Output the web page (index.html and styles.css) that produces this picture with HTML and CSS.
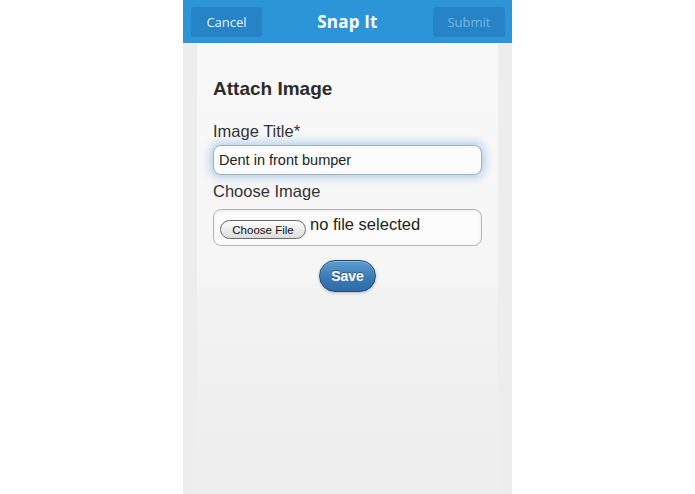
FILE: index.html
```html
<!DOCTYPE html>
<html>
<head>
<meta charset="utf-8">
<link rel="stylesheet" href="styles.css">
<title>Snap It</title>
</head>
<body>
<div class="phone">
  <header class="bar">
    <button class="bar-btn">Cancel</button>
    <h1 class="bar-title">Snap It</h1>
    <button class="bar-btn disabled">Submit</button>
  </header>
  <main class="content">
    <section class="panel">
      <h2 class="heading">Attach Image</h2>
      <label class="label first">Image Title*</label>
      <div class="field focused">Dent in front bumper</div>
      <label class="label">Choose Image</label>
      <div class="field file">
        <span class="file-btn">Choose File</span>
        <span class="file-text">no file selected</span>
      </div>
      <div class="actions">
        <span class="save">Save</span>
      </div>
    </section>
  </main>
</div>
</body>
</html>
```

FILE: styles.css
```css
html, body {
  margin: 0;
  padding: 0;
  background: #ffffff;
  height: 100%;
}
body {
  display: flex;
  justify-content: center;
  font-family: "Liberation Sans", Arial, sans-serif;
}
.phone {
  width: 329px;
  height: 494px;
  display: flex;
  flex-direction: column;
  background: #ededed;
}
.bar {
  height: 43px;
  flex: none;
  background: #2c95d8;
  display: flex;
  align-items: center;
  justify-content: space-between;
  padding: 0 7px 0 8px;
  box-sizing: border-box;
}
.bar-btn {
  width: 71px;
  height: 30px;
  border: 0;
  border-radius: 4px;
  background: #2683c5;
  color: #eaf3fb;
  font-family: "Open Sans", sans-serif;
  font-size: 13px;
  padding: 0;
}
.bar-btn.disabled {
  width: 72px;
  color: #79b6e4;
}
.bar-title {
  margin: 0;
  color: #ffffff;
  font-family: "Open Sans", sans-serif;
  font-weight: 700;
  font-size: 17px;
  letter-spacing: 0.2px;
}
.content {
  flex: 1;
  padding: 0 14px;
  display: flex;
}
.panel {
  flex: 1;
  padding: 14px 16px 0 16px;
  background: linear-gradient(#f8f8f8 0px, #f6f6f6 240px, #f2f2f2 250px, #f1f1f1 330px, #efefef 360px, #eeeeee 450px);
  display: flex;
  flex-direction: column;
  align-items: stretch;
}
.heading {
  margin: 20px 0 0 0;
  font-size: 19px;
  font-weight: 700;
  color: #2b2b2b;
  line-height: 24px;
}
.label {
  margin-top: 4px;
  font-size: 16.5px;
  color: #333333;
  line-height: 20px;
  display: block;
}
.label.first {
  margin-top: 20px;
}
.field {
  box-sizing: border-box;
  border-radius: 8px;
  background: #fcfcfc;
  border: 1px solid #b4b4b4;
  color: #222222;
  display: flex;
  align-items: center;
}
.field.focused {
  margin-top: 4px;
  height: 30px;
  padding-left: 5px;
  font-size: 14.5px;
  border-color: #9ab1c7;
  box-shadow: 0 0 8px 3px rgba(90, 150, 215, 0.4);
  margin-bottom: 2px;
}
.field.file {
  height: 37px;
  margin-top: 8px;
  padding-left: 6px;
  align-items: flex-start;
  padding-top: 10px;
  box-shadow: inset 0 1px 3px rgba(0, 0, 0, 0.08);
}
.file-btn {
  box-sizing: border-box;
  height: 19px;
  width: 86px;
  border: 1px solid #6b6b6b;
  border-radius: 10px;
  background: linear-gradient(#fdfdfd, #dcdcdc);
  font-size: 11.5px;
  color: #111111;
  display: flex;
  align-items: center;
  justify-content: center;
}
.file-text {
  margin-left: 4px;
  margin-top: -5px;
  font-size: 16.5px;
  color: #222222;
}
.actions {
  display: flex;
  justify-content: center;
  margin-top: 14px;
}
.save {
  box-sizing: border-box;
  width: 57px;
  height: 32px;
  border-radius: 16px;
  border: 1px solid #1d4b77;
  background: linear-gradient(#5d9cd0, #3b7ab7 55%, #2f6ba8);
  box-shadow: 0 1px 3px rgba(0, 0, 0, 0.25), inset 0 1px 0 rgba(255, 255, 255, 0.3);
  color: #ffffff;
  font-size: 14px;
  font-weight: 700;
  text-shadow: 0 -1px 0 rgba(0, 0, 0, 0.35);
  display: flex;
  align-items: center;
  justify-content: center;
}
```
